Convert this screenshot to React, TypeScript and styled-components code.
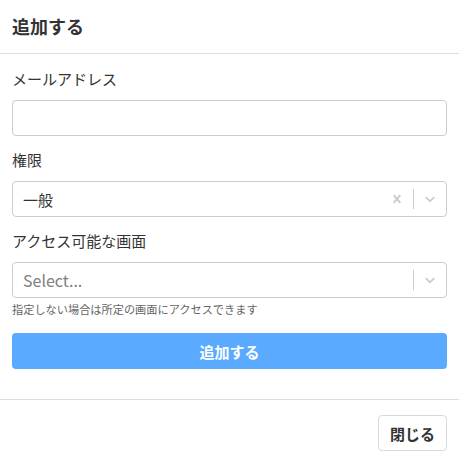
import React from "react";
import styled, { createGlobalStyle } from "styled-components";

const Global = createGlobalStyle`
  html, body { margin: 0; padding: 0; background: #fff; }
  body { font-family: "Noto Sans CJK JP", "Noto Sans", sans-serif; color: #333; }
  * { box-sizing: border-box; }
`;

const Modal = styled.div`
  width: 459px;
  display: flex;
  flex-direction: column;
`;

const Header = styled.div`
  height: 54px;
  padding: 0 12px;
  display: flex;
  align-items: center;
  border-bottom: 1px solid #dedede;
`;

const Title = styled.h2`
  margin: 0;
  font-size: 18px;
  font-weight: 700;
  color: #333;
  line-height: 1;
  padding-bottom: 2px;
`;

const Body = styled.div`
  padding: 14px 12px 30px;
  display: flex;
  flex-direction: column;
  border-bottom: 1px solid #dedede;
`;

const Field = styled.div<{ $last?: boolean }>`
  display: flex;
  flex-direction: column;
  margin-bottom: ${(p) => (p.$last ? "16px" : "13px")};
`;

const Label = styled.label`
  font-size: 15px;
  line-height: 22px;
  margin-bottom: 10px;
  color: #333;
`;

const Input = styled.input`
  height: 36px;
  width: 100%;
  border: 1px solid #ccc;
  border-radius: 4px;
  padding: 0 10px;
  font-size: 15px;
  font-family: inherit;
  outline: none;
`;

const SelectBox = styled.div`
  height: 36px;
  border: 1px solid #ccc;
  border-radius: 4px;
  display: flex;
  align-items: center;
`;

const SelectValue = styled.div<{ $placeholder?: boolean }>`
  flex: 1;
  padding: 0 10px;
  font-size: ${(p) => (p.$placeholder ? "16px" : "15px")};
  color: ${(p) => (p.$placeholder ? "#808080" : "#333")};
`;

const Indicators = styled.div`
  display: flex;
  align-items: stretch;
  align-self: stretch;
`;

const IndicatorBtn = styled.div`
  display: flex;
  align-items: center;
  justify-content: center;
  padding: 0 8px;
  color: #ccc;
`;

const Separator = styled.span`
  width: 1px;
  background: #ccc;
  margin: 7px 0;
`;

const Help = styled.div`
  font-size: 11.2px;
  line-height: 16px;
  color: #666;
  margin-top: 3px;
`;

const Primary = styled.button`
  height: 36px;
  width: 100%;
  border: none;
  border-radius: 4px;
  background: #5aaaff;
  color: #fff;
  font-family: inherit;
  font-size: 15px;
  font-weight: 700;
`;

const Footer = styled.div`
  padding: 15px 12px 12px;
  display: flex;
  justify-content: flex-end;
`;

const Secondary = styled.button`
  height: 36px;
  padding: 0 11px;
  border: 1px solid #d9d9d9;
  border-radius: 4px;
  background: #fff;
  color: #333;
  font-family: inherit;
  font-size: 15px;
  font-weight: 700;
`;

const Cross = () => (
  <svg width="16" height="16" viewBox="0 0 20 20" fill="currentColor">
    <path d="M14.348 14.849c-0.469 0.469-1.229 0.469-1.697 0l-2.651-3.030-2.651 3.029c-0.469 0.469-1.229 0.469-1.697 0-0.469-0.469-0.469-1.229 0-1.697l2.758-3.15-2.759-3.152c-0.469-0.469-0.469-1.228 0-1.697s1.228-0.469 1.697 0l2.652 3.031 2.651-3.031c0.469-0.469 1.228-0.469 1.697 0s0.469 1.229 0 1.697l-2.758 3.152 2.758 3.15c0.469 0.469 0.469 1.229 0 1.698z" />
  </svg>
);

const Chevron = () => (
  <svg width="16" height="16" viewBox="0 0 20 20" fill="currentColor">
    <path d="M4.516 7.548c0.436-0.446 1.043-0.481 1.576 0l3.908 3.747 3.908-3.747c0.533-0.481 1.141-0.446 1.574 0 0.436 0.445 0.408 1.197 0 1.615-0.406 0.418-4.695 4.502-4.695 4.502-0.217 0.223-0.502 0.335-0.787 0.335s-0.57-0.112-0.789-0.335c0 0-4.287-4.084-4.695-4.502s-0.436-1.170 0-1.615z" />
  </svg>
);

export default function App() {
  return (
    <Modal>
      <Global />
      <Header>
        <Title>追加する</Title>
      </Header>
      <Body>
        <Field>
          <Label>メールアドレス</Label>
          <Input type="text" />
        </Field>
        <Field>
          <Label>権限</Label>
          <SelectBox>
            <SelectValue>一般</SelectValue>
            <Indicators>
              <IndicatorBtn>
                <Cross />
              </IndicatorBtn>
              <Separator />
              <IndicatorBtn>
                <Chevron />
              </IndicatorBtn>
            </Indicators>
          </SelectBox>
        </Field>
        <Field $last>
          <Label>アクセス可能な画面</Label>
          <SelectBox>
            <SelectValue $placeholder>Select...</SelectValue>
            <Indicators>
              <Separator />
              <IndicatorBtn>
                <Chevron />
              </IndicatorBtn>
            </Indicators>
          </SelectBox>
          <Help>指定しない場合は所定の画面にアクセスできます</Help>
        </Field>
        <Primary>追加する</Primary>
      </Body>
      <Footer>
        <Secondary>閉じる</Secondary>
      </Footer>
    </Modal>
  );
}
